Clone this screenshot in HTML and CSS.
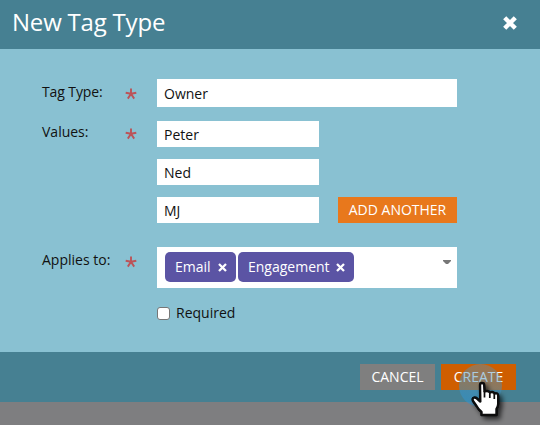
FILE: index.html
```html
<!DOCTYPE html>
<html lang="en">
<head>
<meta charset="utf-8">
<title>New Tag Type</title>
<link rel="stylesheet" href="styles.css">
</head>
<body>
<div class="dialog">
  <header class="header">
    <h1>New Tag Type</h1>
    <svg class="close" width="14" height="14" viewBox="0 0 14 14"><path d="M1.7 1.7 12.3 12.3M12.3 1.7 1.7 12.3"/></svg>
  </header>
  <main class="body">
    <div class="row row-type">
      <span class="label">Tag Type:</span><span class="star"><svg width="12" height="12" viewBox="0 0 12 12"><path d="M6 5.8V.6M6 5.8.7 4.7M6 5.8l5.3-1.1M6 5.8 2.8 10.6M6 5.8l3.2 4.8"/></svg></span>
      <div class="field">Owner</div>
    </div>
    <div class="row row-values">
      <span class="label">Values:</span><span class="star"><svg width="12" height="12" viewBox="0 0 12 12"><path d="M6 5.8V.6M6 5.8.7 4.7M6 5.8l5.3-1.1M6 5.8 2.8 10.6M6 5.8l3.2 4.8"/></svg></span>
      <div class="values">
        <div class="field">Peter</div>
        <div class="field">Ned</div>
        <div class="field">MJ</div>
      </div>
      <div class="button add"><span>ADD ANOTHER</span></div>
    </div>
    <div class="row row-applies">
      <span class="label">Applies to:</span><span class="star"><svg width="12" height="12" viewBox="0 0 12 12"><path d="M6 5.8V.6M6 5.8.7 4.7M6 5.8l5.3-1.1M6 5.8 2.8 10.6M6 5.8l3.2 4.8"/></svg></span>
      <div class="select">
        <div class="chip email"><span>Email</span><svg width="9" height="9" viewBox="0 0 9 9"><path d="M1 1 8 8M8 1 1 8"/></svg></div>
        <div class="chip engagement"><span>Engagement</span><svg width="9" height="9" viewBox="0 0 9 9"><path d="M1 1 8 8M8 1 1 8"/></svg></div>
        <svg class="arrow" width="8" height="4" viewBox="0 0 8 4"><path d="M0 0H8V1L5 4H3L0 1Z"/></svg>
      </div>
    </div>
    <label class="required"><span class="box"></span><span class="caption">Required</span></label>
  </main>
  <footer class="footer">
    <div class="button cancel"><span>CANCEL</span></div>
    <div class="button create"><span>CREATE</span></div>
  </footer>
</div>
<svg class="pointer" width="80" height="70" viewBox="0 0 80 70">
  <defs>
    <linearGradient id="halo" x1=".7" y1="0" x2=".35" y2="1">
      <stop offset="0" stop-color="#5c93b4" stop-opacity=".42"/>
      <stop offset="1" stop-color="#2f92cc" stop-opacity=".62"/>
    </linearGradient>
    <filter id="shadow" x="-30%" y="-30%" width="180%" height="180%"><feDropShadow dx="3" dy="3" stdDeviation="2.5" flood-color="#000" flood-opacity=".7"/></filter>
  </defs>
  <circle cx="40.5" cy="30.5" r="21.5" fill="url(#halo)"/>
  <g filter="url(#shadow)">
    <path class="hand" d="M40 30Q40 28 42 28Q44.2 28 44.2 30L44.5 36.5Q48 35 50 37.5Q53 36 54.5 38.5Q58.2 37.5 58.2 41V49Q58 52 56.5 54V60H41.5V57Q38 54 36.5 51L33 46Q31.8 43.3 34 42.6Q36 42 38 44.5L40.3 46.5Z"/>
    <path class="fingers" d="M44.5 36V42.5M49.8 37V43M54.3 39V44"/>
  </g>
</svg>
</body>
</html>
```
FILE: styles.css
```css
* { box-sizing: border-box; }
body {
  margin: 0;
  width: 540px;
  height: 425px;
  overflow: hidden;
  background: #7e7e80;
  color: #111;
  font: 14px/20px "Open Sans", sans-serif;
}
.header {
  display: flex;
  justify-content: space-between;
  height: 49px;
  padding: 0 23px 0 12px;
  background: #468092;
}
h1 {
  margin: 0;
  color: #fff;
  font-size: 24px;
  font-weight: 400;
  letter-spacing: -.2px;
  line-height: 44px;
  white-space: nowrap;
}
.close { margin-top: 16px; fill: none; stroke: #fff; stroke-width: 4.4; }
.body { height: 303px; padding: 30px 0 0 42px; background: #89c1d2; }
.row { display: flex; align-items: flex-start; }
.row-type { height: 42px; }
.row-values { height: 126px; }
.row-applies { height: 59px; }
.label { width: 83px; padding-top: 3px; white-space: nowrap; }
.row-type .label { letter-spacing: -.1px; }
.row-values .label { padding-top: 1px; }
.star { width: 32px; padding-top: 9px; }
.row-values .star { padding-top: 7px; }
.star svg { display: block; fill: none; stroke: #bc5358; stroke-width: 1.9; }
.field { width: 300px; height: 28px; padding: 5px 7px; background: #fff; }
.values { display: flex; flex-direction: column; gap: 12px; }
.values .field { width: 162px; height: 26px; padding-top: 4px; }
.button {
  display: flex;
  justify-content: center;
  height: 26px;
  color: #fff;
  line-height: 26px;
  white-space: nowrap;
}
.add { width: 119px; margin: 76px 0 0 19px; background: #e8781c; }
.row-applies .label { padding-top: 3px; }
.select {
  display: flex;
  gap: 2px;
  width: 300px;
  height: 41px;
  padding: 5px 6px 0 8px;
  background: #fff;
}
.chip {
  display: flex;
  justify-content: space-between;
  height: 30px;
  padding: 0 9px 0 10px;
  border-radius: 5px;
  background: #5b54a4;
  color: #fff;
  line-height: 30px;
}
.chip svg { margin-top: 11px; fill: none; stroke: #fff; stroke-width: 2.3; }
.email { width: 71px; }
.engagement { width: 116px; }
.arrow { margin: 8px 0 0 auto; fill: #777; }
.required { display: flex; gap: 6px; margin-left: 115px; }
.box { width: 13px; height: 13px; margin-top: 1px; border: 1px solid #767676; border-radius: 3px; background: #fff; }
.caption { line-height: 14px; }
.footer {
  display: flex;
  justify-content: flex-end;
  gap: 6px;
  height: 50px;
  padding: 12px 24px 0 0;
  background: #468092;
}
.cancel { width: 75px; background: #7f7f7f; }
.create { width: 75px; background: #cf5e00; }
.pointer { position: absolute; left: 440px; top: 355px; }
.hand { fill: #fff; stroke: #080808; stroke-width: 2.4; stroke-linejoin: round; }
.fingers { fill: none; stroke: #080808; stroke-width: 1.7; }
```
